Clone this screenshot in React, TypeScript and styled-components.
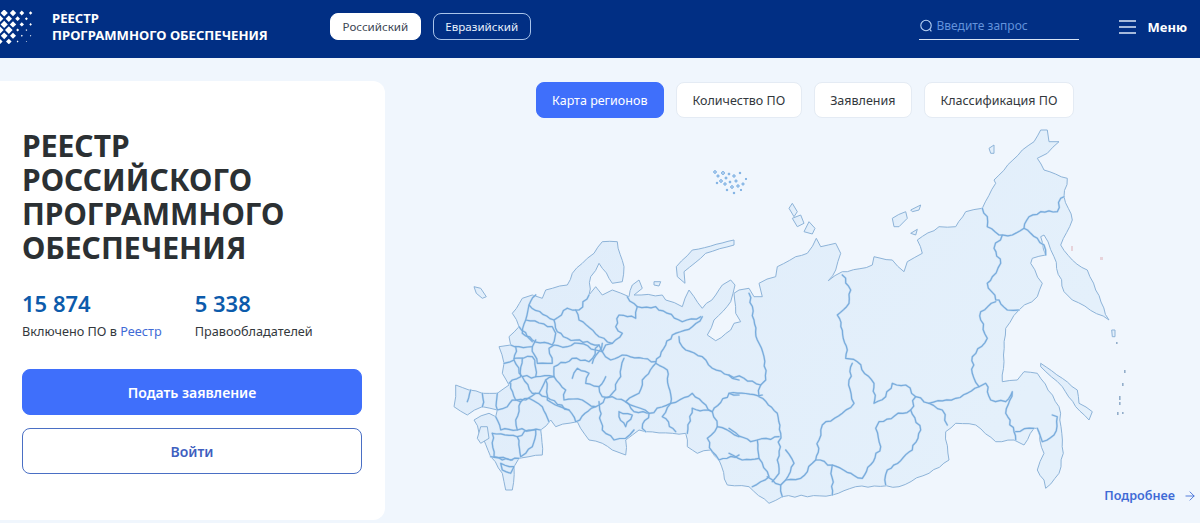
import React from 'react';
import styled, {createGlobalStyle} from 'styled-components';
import {ArrowRight} from 'lucide-react';

const GlobalStyle = createGlobalStyle`
	html, body {
		margin: 0;
		height: 523px;
		overflow: hidden;
		background: #f0f6fd;
		font-family: 'Noto Sans', 'Open Sans', sans-serif;
	}
	* {
		box-sizing: border-box;
	}
`;

const Header = styled.header`
	display: flex;
	align-items: center;
	height: 58px;
	padding-bottom: 5px;
	background: #012f84;
	color: #fff;
`;

const Brand = styled.div`
	display: flex;
	align-items: center;
	gap: 18px;
	width: 330px;
`;

const BrandName = styled.div`
	font-size: 13.1px;
	font-weight: 700;
	line-height: 17px;
`;

const Switcher = styled.div`
	display: flex;
	gap: 12px;
`;

const SwitchButton = styled.button<{$active?: boolean}>`
	height: 27px;
	padding: 0 11.5px;
	border: 1px solid ${p => (p.$active ? '#fff' : '#a9c4ea')};
	border-radius: 8px;
	background: ${p => (p.$active ? '#fff' : 'transparent')};
	color: ${p => (p.$active ? '#3c4653' : '#e8f0fb')};
	font: 400 11.6px 'Noto Sans', sans-serif;
`;

const Search = styled.div`
	display: flex;
	align-items: center;
	gap: 4px;
	width: 160px;
	height: 27px;
	margin: 0 40px 0 auto;
	border-bottom: 1px solid #d7e4f6;
	color: #6393dc;
	font-size: 12px;
	padding: 0 0 1px 0;
`;

const MenuButton = styled.div`
	display: flex;
	align-items: center;
	gap: 12px;
	margin-right: 13px;
	font-size: 13px;
	font-weight: 700;
`;

const Main = styled.main`
	display: flex;
	height: 465px;
`;

const Card = styled.section`
	width: 385px;
	margin: 23px 0 3px;
	padding: 48px 23px 0 22px;
	background: #fff;
	border-radius: 0 12px 12px 0;
`;

const Title = styled.h1`
	margin: 0;
	color: #2b3033;
	font-size: 30px;
	font-weight: 700;
	line-height: 34px;
`;

const Stats = styled.div`
	display: flex;
	gap: 33px;
	margin-top: 23px;
`;

const StatValue = styled.div`
	color: #0c5bab;
	font-size: 22px;
	font-weight: 600;
	line-height: 30px;
`;

const StatLabel = styled.div`
	margin-top: 4px;
	color: #33383d;
	font-size: 12.7px;
	line-height: 18px;
`;

const RegistryLink = styled.span`
	color: #3f6bd6;
`;

const CardButton = styled.button<{$outline?: boolean}>`
	display: block;
	width: 100%;
	height: 46px;
	margin-top: ${p => (p.$outline ? '13px' : '29px')};
	border: 1px solid ${p => (p.$outline ? '#4a6fc4' : '#3f6ffb')};
	border-radius: 8px;
	background: ${p => (p.$outline ? '#fff' : '#3f6ffb')};
	color: ${p => (p.$outline ? '#3f5fc0' : '#fff')};
	font: 600 14px 'Noto Sans', sans-serif;
`;

const MapPanel = styled.section`
	position: relative;
	flex: 1;
	display: flex;
	flex-direction: column;
`;

const Tabs = styled.nav`
	display: flex;
	gap: 12px;
	padding: 24px 0 0 150.5px;
`;

const Tab = styled.button<{$active?: boolean}>`
	height: 36px;
	padding: 0 15.5px;
	border: 1px solid ${p => (p.$active ? '#3f6ffb' : '#e4ebf4')};
	border-radius: 8px;
	background: ${p => (p.$active ? '#3f6ffb' : '#fff')};
	color: ${p => (p.$active ? '#fff' : '#33383d')};
	font: 400 12.5px 'Noto Sans', sans-serif;
`;

const MapSvg = styled.svg`
	display: block;
	width: 814px;
	height: 405px;
`;

const MoreLink = styled.a`
	position: absolute;
	right: 3px;
	bottom: 19px;
	display: flex;
	align-items: center;
	gap: 8px;
	color: #3f6bd6;
	font-size: 12.6px;
	font-weight: 600;
`;

// map points are traced in two crops of the picture, so each list has its own origin
const west = (s: string) =>
	s.trim().split(/\s+/).map(p => {
		const [x, y] = p.split(',').map(Number);
		return [440 + x / 3, 230 + y / 3];
	});

const east = (s: string) =>
	s.trim().split(/\s+/).map(p => {
		const [x, y] = p.split(',').map(Number);
		return [730 + x / 3, 120 + y / 3];
	});

let seed = 4711;
const noise = () => {
	seed = (seed * 16807) % 2147483647;
	return seed / 2147483647 - 0.5;
};

// breaks long straight runs up so coasts and borders read as hand traced
const wiggle = (pts: number[][], amp: number, step = 6) => {
	const out: string[] = [];
	pts.forEach(([x, y], i) => {
		out.push(`${x.toFixed(1)},${y.toFixed(1)}`);
		const next = pts[i + 1];
		if (!next) return;
		const dx = next[0] - x;
		const dy = next[1] - y;
		const len = Math.hypot(dx, dy);
		const parts = Math.floor(len / step);
		for (let k = 1; k < parts; k++) {
			const off = noise() * amp * 2;
			const px = x + (dx * k) / parts - (dy / len) * off;
			const py = y + (dy * k) / parts + (dx / len) * off;
			out.push(`${px.toFixed(1)},${py.toFixed(1)}`);
		}
	});
	return out.join(' ');
};

const OUTLINE = wiggle(
	[
		...east(`90,490 140,470 145,440 200,410 235,400 262,355 275,380 320,370 335,400 320,450 298,482 340,455 355,455 430,435 435,410 490,420
		525,455 535,425 580,400 565,360 630,320 680,320 710,275 760,265 800,190 795,180 880,90 915,65 935,30 955,30 960,65 990,65 955,100 925,115
		945,150 1015,175 1005,230 1030,300 995,375 1030,420 1075,450 1100,510 1140,600 1030,540 1005,515 975,410 945,345 935,350 950,405 910,415
		905,430 940,490 925,530 870,570 830,625 820,785 865,780 885,755 925,760 990,860 1003,1000 990,1060 950,1105 945,1080 925,1050 945,1000
		925,925 915,925 885,975 855,960 800,965 740,915 680,910 650,935 660,1020 600,1060 510,1100 380,1100 310,1125 160,1130 120,1150 60,1100`),
		...west(`865,765 840,690 815,660 775,670 745,650 740,610 700,610 620,605 600,600 560,630 560,675 520,660 490,640 450,630 415,575 350,590
		335,570 305,600 310,675 270,680 240,685 225,710 220,780 200,780 190,730 155,680 105,570 150,550 170,560 175,540 130,530 85,555 45,530
		50,500 50,465 90,480 130,490 175,490 210,465 190,430 195,400 180,350 215,345 210,320 240,290 220,250 250,205 280,195 310,205 320,180
		340,175 385,165 400,130 445,85 465,70 490,35 535,35 555,110 550,155 520,160 480,100 455,140 450,195 470,170 490,195 520,180 570,200
		580,165 600,150 610,175 585,195 670,195 680,210 730,230 750,180 765,200 790,235 830,195 850,165 875,150 888,165 875,215 825,270 805,315
		830,332 875,300 885,280 905,275 890,250 885,190`),
		...east('30,510 60,505 75,530 100,530'),
	],
	1,
);

const ISLANDS = [
	west('105,170 125,175 142,200 130,205 112,190'),
	west('712,110 760,60 885,30 885,45 800,70 735,125 738,160 715,140'),
	west('645,155 665,155 660,168 645,165'),
	east('180,265 190,250 205,275 195,290'),
	east('190,295 215,285 225,310 205,320'),
	east('225,335 240,305 258,325 250,342'),
	east('490,295 530,275 535,295 510,320 495,320'),
	east('545,270 575,255 570,270 550,275'),
	east('545,340 565,328 560,345'),
	east('780,85 795,75 795,100 785,100'),
	east('935,730 1000,775 1045,810 1050,850 1090,875 1080,900 1040,860 1000,800 935,740'),
	east('1148,630 1158,630 1158,650 1150,650'),
	west('125,590 145,590 150,625 125,640 115,625'),
];

const ARCTIC_DOTS = [
	[716, 172, 1.3], [719, 176, 1.1], [724, 173, 1.4], [727, 178, 1], [722, 181, 1.3], [730, 174, 0.9], [735, 176, 1.2],
	[741, 173, 0.8], [718, 183, 0.8], [726, 184, 1.2], [731, 182, 0.9], [737, 181, 1.1], [733, 187, 1.3], [728, 190, 0.8],
	[739, 186, 1.2], [744, 184, 1.1], [747, 179, 0.7], [735, 193, 0.8], [742, 190, 0.7],
];

const SMALL_ISLES = [
	[1125, 370, 3], [1123, 383, 3], [1120, 396, 4], [1120, 402, 3], [1118, 412, 3], [1123, 412, 2], [1117, 342, 2],
];

const BORDERS = [
	east('760,265 775,290 775,320 810,345 850,345 885,325 900,290 935,275 985,275 995,235 1005,230'),
	east('885,325 925,355 945,375 950,405'),
	east('820,345 795,385 815,430 790,470 775,490 800,540 810,540 835,570 870,570'),
	east(`800,545 755,575 755,600 775,655 730,710 730,760 750,800 680,835 600,850 560,830 530,795 490,790 470,830 435,850 435,790 385,725
		350,715 355,690 325,585 360,550 365,510 340,465`),
	east('750,800 770,790 785,840 830,845 850,815 830,880 855,935 860,960'),
	east('860,935 915,925'),
	east('925,925 940,965 975,945 985,890 970,885'),
	east('600,850 640,870 655,915'),
	east(`560,830 545,870 450,905 440,925 455,980 400,1075 310,1035 260,1020 270,960 280,915 340,880 375,850 360,780 370,730`),
	east('545,870 575,930 550,990 475,1050 470,1095'),
	east('60,520 75,600 85,660 105,710 110,780 95,795 90,830 145,880 155,940 145,1020 150,1060 130,1085'),
	east('260,1020 215,1075 170,1080 155,1095 160,1130'),
	east('150,950 85,960 65,965 0,925'),
	east('85,960 90,1015 115,1055 120,1070 70,1100'),
	east('170,990 195,1030 170,1080'),
	east('0,820 100,825'),
	east('0,765 45,775 95,795'),
	east('0,1000 40,1020 90,1015'),
	east('115,1070 155,1095'),
	east('310,1035 310,1125'),
	west('565,200 595,230 650,230 730,275 785,260'),
	west('790,260 760,290 700,315 680,345 650,400 610,450 600,490 560,515'),
	west('720,320 730,350 790,380 820,415 880,445 900,450'),
	west('650,400 685,420 695,520 630,550 590,530 560,515'),
	west('695,520 670,560 710,605'),
	west('760,535 745,610'),
	west('630,550 610,595 620,605'),
	west('480,515 490,600 525,630 560,625 585,600'),
	west('540,545 580,555 560,590 540,560 540,545'),
	west('410,240 420,270 480,320 520,340 550,310 530,290 540,255 590,265 595,230'),
	west('520,340 500,345 490,365 515,390 550,375 650,395'),
	west('385,235 420,240 450,195'),
	west('385,235 345,270 270,225 290,195'),
	west('345,270 355,305 385,325 480,345 490,365'),
	west('270,225 260,270 340,290 350,310 340,345 280,330 250,310 260,270'),
	west('240,290 265,320 280,335'),
	west('215,345 240,350 280,350 290,330'),
	west('230,350 225,390 195,400'),
	west('280,350 295,400 340,400 330,355 345,345 385,350 420,340 470,360 490,365'),
	west('225,385 280,380 290,415 290,440 345,440 345,410 400,385 450,395 480,345'),
	west('250,385 245,440 210,460'),
	west('225,390 250,440 280,490 300,490 320,450 345,440'),
	west('250,440 290,440'),
	west('215,460 230,510 260,510 290,490'),
	west('175,490 175,540 205,530 220,510 245,515'),
	west('245,515 230,570 235,600 305,600'),
	west('245,515 270,505 310,530 330,575'),
	west('300,490 390,540 410,575 470,530 520,490 545,440 555,385'),
	west('320,450 325,510 390,540'),
	west('345,440 380,480 375,510 430,510 445,520 470,530'),
	west('400,445 415,415 450,430 440,460 480,470 500,440'),
	west('460,400 490,340'),
	west('480,470 490,500 520,500 560,515'),
	west('170,560 185,600 235,600'),
	west('160,610 235,620 245,680'),
	west('160,610 165,680 220,690'),
	west('235,620 270,600 290,600 280,650 260,670 245,680'),
	west('155,680 190,690 240,685'),
	west('185,700 225,710 215,730 190,720 185,700'),
	west('130,490 130,530'),
	west('95,480 85,515'),
	west('695,520 760,490 820,545 870,490 900,495'),
	west('820,545 835,590 900,620'),
	west('835,590 805,625 820,665 840,690 900,675'),
	west('820,545 760,535'),
	west('560,515 585,545 625,550'),
].map(p => wiggle(p, 1.5, 4));

// staggered diamonds, big on the left and fading out to the right and bottom
const LOGO_ROWS = [
	[3.6, 3.2, 2.4, 1.7],
	[3.4, 3.2, 2.4, 1.5],
	[3.6, 3.2, 2.2, 1.3],
	[3.6, 3.8, 1.5, 0.9],
	[3.4, 3, 1, 0.7],
	[2.6, 2.8, 0.9, 0.6],
];

const Logo = () => (
	<svg width="34" height="34" viewBox="0 0 34 34">
		{LOGO_ROWS.map((row, r) =>
			row.map((size, c) => {
				const x = c * 8.8 + (r % 2 ? 0 : 4.2);
				const y = r * 5.7 + 3;
				return (
					<polygon
						key={`${r}-${c}`}
						fill="#fff"
						points={`${x},${y - size} ${x + size},${y} ${x},${y + size} ${x - size},${y}`}
					/>
				);
			}),
		)}
	</svg>
);

const RussiaMap = () => (
	<MapSvg viewBox="386 118 814 405">
		<defs>
			<linearGradient id="land" x1="0" y1="0" x2="1" y2="0.4">
				<stop offset="0" stopColor="#dfecfa" />
				<stop offset="1" stopColor="#e4f0fb" />
			</linearGradient>
		</defs>
		<g fill="url(#land)" stroke="#8db3d8" strokeWidth="1" strokeLinejoin="round">
			<polygon points={OUTLINE} />
			{ISLANDS.map((p, i) => (
				<polygon key={i} points={wiggle(p, 0.6, 6)} />
			))}
		</g>
		<g fill="none" stroke="#c4dbf1" strokeWidth="2.2" strokeLinejoin="round" strokeLinecap="round">
			{BORDERS.map((p, i) => (
				<polyline key={i} points={p} />
			))}
		</g>
		<g fill="none" stroke="#77abdc" strokeWidth="1.2" strokeLinejoin="round" strokeLinecap="round">
			{BORDERS.map((p, i) => (
				<polyline key={i} points={p} />
			))}
		</g>
		<g fill="#e4effa" stroke="#5f9ddb" strokeWidth="0.9">
			{ARCTIC_DOTS.map(([x, y, r], i) => (
				<circle key={i} cx={x} cy={y} r={r} />
			))}
		</g>
		<g fill="#93aecb">
			{SMALL_ISLES.map(([x, y, h], i) => (
				<rect key={i} x={x} y={y} width="1.6" height={h} />
			))}
		</g>
		<g fill="#e7d3da">
			<rect x="1072" y="246" width="2" height="5" />
			<rect x="1101" y="257" width="3" height="3" />
		</g>
	</MapSvg>
);

const App = () => (
	<>
		<GlobalStyle />
		<Header>
			<Brand>
				<Logo />
				<BrandName>
					РЕЕСТР
					<br />
					ПРОГРАММНОГО ОБЕСПЕЧЕНИЯ
				</BrandName>
			</Brand>
			<Switcher>
				<SwitchButton $active>Российский</SwitchButton>
				<SwitchButton>Евразийский</SwitchButton>
			</Switcher>
			<Search>
				<svg width="14" height="14" viewBox="0 0 14 14" fill="none" stroke="#b9d3f5" strokeWidth="1.1">
					<circle cx="7" cy="6.5" r="5.2" />
					<path d="M10.8 10.4L12.4 12.4" />
				</svg>
				Введите запрос
			</Search>
			<MenuButton>
				<svg width="17" height="14" viewBox="0 0 17 14" stroke="#dbe7f8" strokeWidth="1.4">
					<path d="M0 1h17M0 7h17M0 13h17" />
				</svg>
				Меню
			</MenuButton>
		</Header>
		<Main>
			<Card>
				<Title>
					РЕЕСТР
					<br />
					РОССИЙСКОГО
					<br />
					ПРОГРАММНОГО
					<br />
					ОБЕСПЕЧЕНИЯ
				</Title>
				<Stats>
					<div>
						<StatValue>15 874</StatValue>
						<StatLabel>
							Включено ПО в <RegistryLink>Реестр</RegistryLink>
						</StatLabel>
					</div>
					<div>
						<StatValue>5 338</StatValue>
						<StatLabel>Правообладателей</StatLabel>
					</div>
				</Stats>
				<CardButton>Подать заявление</CardButton>
				<CardButton $outline>Войти</CardButton>
			</Card>
			<MapPanel>
				<Tabs>
					<Tab $active>Карта регионов</Tab>
					<Tab>Количество ПО</Tab>
					<Tab>Заявления</Tab>
					<Tab>Классификация ПО</Tab>
				</Tabs>
				<RussiaMap />
				<MoreLink>
					Подробнее
					<ArrowRight size={14} strokeWidth={1.5} />
				</MoreLink>
			</MapPanel>
		</Main>
	</>
);

export default App;
